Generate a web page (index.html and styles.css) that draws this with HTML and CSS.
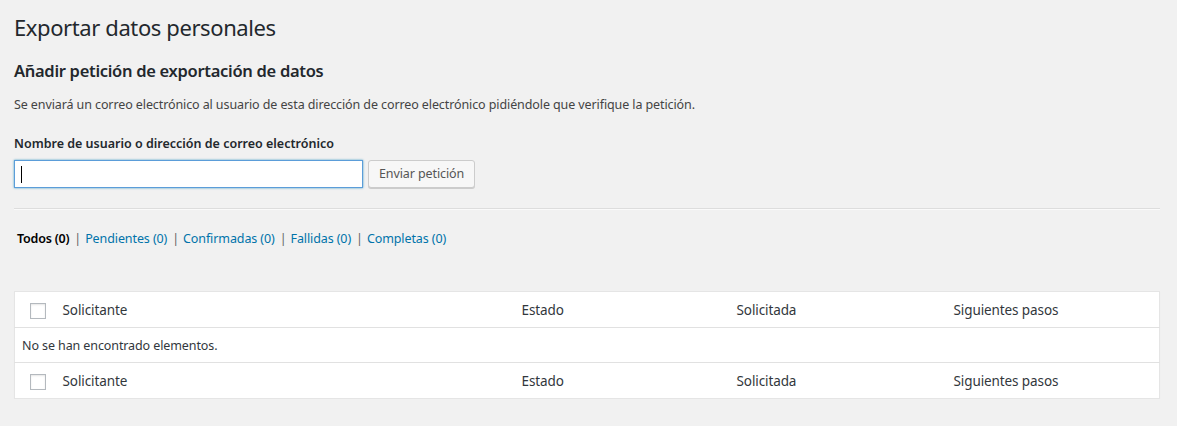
FILE: index.html
```html
<!DOCTYPE html>
<html lang="es">
<head>
  <meta charset="UTF-8" />
  <title>Exportar datos personales</title>
  <link rel="stylesheet" href="styles.css">
</head>
<body>
  <div class="wrap">
    <h1>Exportar datos personales</h1>

    <!-- Add request form -->
    <h2>Añadir petición de exportación de datos</h2>
    <p class="intro">Se enviará un correo electrónico al usuario de esta dirección de correo electrónico pidiéndole que verifique la petición.</p>
    <label class="field-label" for="username">Nombre de usuario o dirección de correo electrónico</label>
    <div class="form-row">
      <div class="input-wrap">
        <input type="text" id="username" class="text-input" />
        <span class="caret"></span>
      </div>
      <button class="button">Enviar petición</button>
    </div>

    <hr class="divider" />

    <!-- Status filters -->
    <ul class="subsubsub">
      <li class="current">Todos (0)</li>
      <li><span class="sep">|</span><a href="#">Pendientes (0)</a></li>
      <li><span class="sep">|</span><a href="#">Confirmadas (0)</a></li>
      <li><span class="sep">|</span><a href="#">Fallidas (0)</a></li>
      <li><span class="sep">|</span><a href="#">Completas (0)</a></li>
    </ul>

    <!-- Requests table -->
    <table class="list-table">
      <colgroup>
        <col class="col-check" />
        <col class="col-main" />
        <col class="col-state" />
        <col class="col-date" />
        <col />
      </colgroup>
      <thead>
        <tr>
          <td class="check-column"><span class="checkbox"></span></td>
          <th>Solicitante</th>
          <th>Estado</th>
          <th>Solicitada</th>
          <th>Siguientes pasos</th>
        </tr>
      </thead>
      <tbody>
        <tr class="no-items">
          <td colspan="5">No se han encontrado elementos.</td>
        </tr>
      </tbody>
      <tfoot>
        <tr>
          <td class="check-column"><span class="checkbox"></span></td>
          <th>Solicitante</th>
          <th>Estado</th>
          <th>Solicitada</th>
          <th>Siguientes pasos</th>
        </tr>
      </tfoot>
    </table>
  </div>
</body>
</html>
```

FILE: styles.css
```css
* { box-sizing: border-box; }
body {
  margin: 0;
  background: #f1f1f1;
  font-family: "Noto Sans", "Open Sans", sans-serif;
  font-size: 12.5px;
  letter-spacing: -0.1px;
  color: #444;
}

.wrap {
  padding: 12px 17px 0 14px;
}

h1 {
  margin: 0;
  font-size: 22px;
  font-weight: 400;
  letter-spacing: -0.4px;
  line-height: 30px;
  color: #23282d;
}

h2 {
  margin: 18px 0 0;
  font-size: 16.5px;
  font-weight: 600;
  letter-spacing: -0.3px;
  line-height: 22px;
  color: #23282d;
}

.intro {
  margin: 13px 0 0;
  line-height: 20px;
}

.field-label {
  display: block;
  margin-top: 19px;
  font-weight: 600;
  letter-spacing: 0;
  line-height: 20px;
  color: #23282d;
}

.form-row {
  display: flex;
  gap: 5px;
  margin-top: 6px;
}

.input-wrap {
  position: relative;
}

.text-input {
  display: block;
  width: 349px;
  height: 28px;
  border: 1px solid #5b9dd9;
  box-shadow: 0 0 2px rgba(30, 140, 190, 0.8);
  background: #fff;
  outline: none;
  padding: 0 6px;
  font: inherit;
}

.caret {
  position: absolute;
  left: 7px;
  top: 6px;
  width: 1px;
  height: 17px;
  background: #000;
}

.button {
  height: 28px;
  padding: 0 10px 1px;
  border: 1px solid #ccc;
  border-radius: 3px;
  background: #f7f7f7;
  box-shadow: 0 1px 0 #ccc;
  color: #555;
  font: inherit;
  letter-spacing: -0.1px;
  cursor: pointer;
}

.divider {
  margin: 20px 0 0;
  border: 0;
  border-top: 1px solid #ddd;
  border-bottom: 1px solid #fafafa;
}

.subsubsub {
  list-style: none;
  margin: 19px 0 0;
  padding: 0 0 0 3px;
  display: flex;
  line-height: 20px;
  color: #666;
}

.subsubsub li { white-space: nowrap; }

.subsubsub .current {
  color: #000;
  font-weight: 600;
  letter-spacing: -0.2px;
}

.subsubsub .sep { margin: 0 4px 0 5px; }

.subsubsub a {
  color: #0073aa;
  text-decoration: none;
}

.list-table {
  margin-top: 42px;
  width: 100%;
  table-layout: fixed;
  border-collapse: collapse;
  background: #fff;
  border: 1px solid #e5e5e5;
  box-shadow: 0 1px 1px rgba(0, 0, 0, 0.04);
}

.col-check { width: 38px; }
.col-main { width: 459px; }
.col-state { width: 215px; }
.col-date { width: 217px; }

.list-table th {
  height: 36px;
  padding: 0 10px;
  text-align: left;
  font-size: 13.5px;
  font-weight: 400;
  color: #32373c;
}

.list-table thead tr { border-bottom: 1px solid #e1e1e1; }
.list-table tfoot tr { border-top: 1px solid #e1e1e1; }

.check-column {
  padding: 2px 0 0 15px;
  vertical-align: middle;
}

.checkbox {
  display: block;
  width: 16px;
  height: 16px;
  border: 1px solid #b4b9be;
  box-shadow: inset 0 1px 2px rgba(0, 0, 0, 0.1);
  background: #fff;
}

.no-items td {
  height: 35px;
  padding: 0 7px;
  color: #32373c;
}
```
